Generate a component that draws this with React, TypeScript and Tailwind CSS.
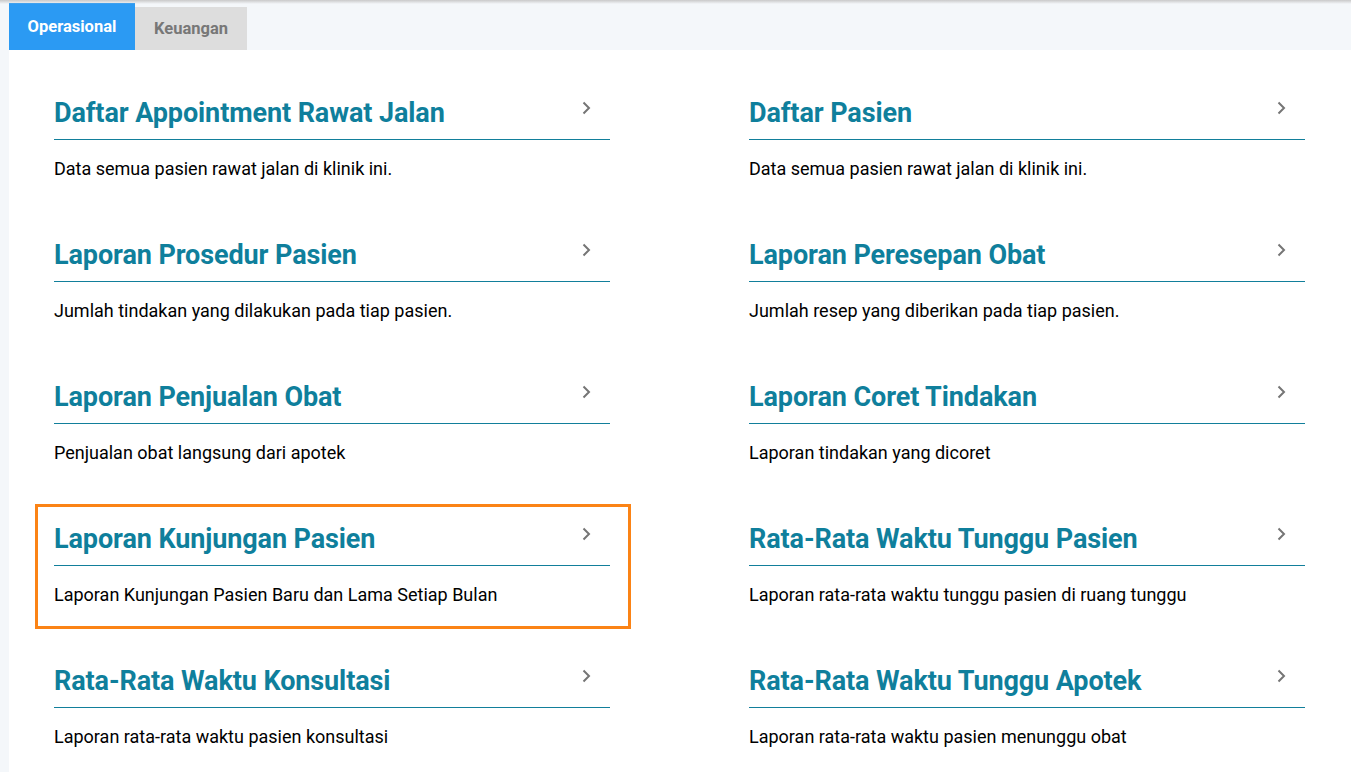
import React from "react";

interface Report {
  title: string;
  desc: string;
  active?: boolean;
}

const reports: Report[] = [
  { title: "Daftar Appointment Rawat Jalan", desc: "Data semua pasien rawat jalan di klinik ini." },
  { title: "Daftar Pasien", desc: "Data semua pasien rawat jalan di klinik ini." },
  { title: "Laporan Prosedur Pasien", desc: "Jumlah tindakan yang dilakukan pada tiap pasien." },
  { title: "Laporan Peresepan Obat", desc: "Jumlah resep yang diberikan pada tiap pasien." },
  { title: "Laporan Penjualan Obat", desc: "Penjualan obat langsung dari apotek" },
  { title: "Laporan Coret Tindakan", desc: "Laporan tindakan yang dicoret" },
  { title: "Laporan Kunjungan Pasien", desc: "Laporan Kunjungan Pasien Baru dan Lama Setiap Bulan", active: true },
  { title: "Rata-Rata Waktu Tunggu Pasien", desc: "Laporan rata-rata waktu tunggu pasien di ruang tunggu" },
  { title: "Rata-Rata Waktu Konsultasi", desc: "Laporan rata-rata waktu pasien konsultasi" },
  { title: "Rata-Rata Waktu Tunggu Apotek", desc: "Laporan rata-rata waktu pasien menunggu obat" },
];

const Chevron = () => (
  <svg width="10" height="14" viewBox="0 0 10 14" className="shrink-0 mt-[-10px] mr-[19px]">
    <path d="M2.5 1.5 L8 7 L2.5 12.5" fill="none" stroke="#757575" strokeWidth="2" />
  </svg>
);

const ReportCard: React.FC<{ report: Report }> = ({ report }) => (
  <div
    className={`border-[3px] pl-[16px] pr-[18px] pt-[16px] pb-[19px] cursor-pointer ${
      report.active ? "border-[#fb8315]" : "border-transparent"
    }`}
  >
    <div className="flex items-center justify-between border-b border-[#127f9b] pb-[10px]">
      <h2 className="text-[27px] leading-[32px] font-bold text-[#0f7f9c] tracking-[-0.1px]">
        {report.title}
      </h2>
      <Chevron />
    </div>
    <p className="mt-[17px] text-[18px] leading-[24px] text-black">{report.desc}</p>
  </div>
);

export default function App() {
  return (
    <div className="relative min-h-screen bg-[#f4f7fa] pl-[9px] font-['Roboto',sans-serif]">
      {/* top shadow */}
      <div className="absolute inset-x-0 top-0 h-[4px] bg-gradient-to-b from-[#c9c9c9] to-transparent" />
      <div className="flex items-end h-[50px]">
        <div className="w-[126px] h-[47px] bg-[#2b9af3] text-white text-[16.5px] font-bold flex items-center justify-center pt-[1px]">
          Operasional
        </div>
        <div className="w-[112px] h-[43px] bg-[#dddddd] text-[#777777] text-[16.5px] font-bold flex items-center justify-center pt-[2px]">
          Keuangan
        </div>
      </div>
      <div className="bg-white pt-[28px] pl-[26px] pr-[25px] pb-[20px]">
        <div className="grid grid-cols-[596px_596px] gap-x-[99px] gap-y-[17px]">
          {reports.map((r) => (
            <ReportCard key={r.title} report={r} />
          ))}
        </div>
      </div>
    </div>
  );
}
